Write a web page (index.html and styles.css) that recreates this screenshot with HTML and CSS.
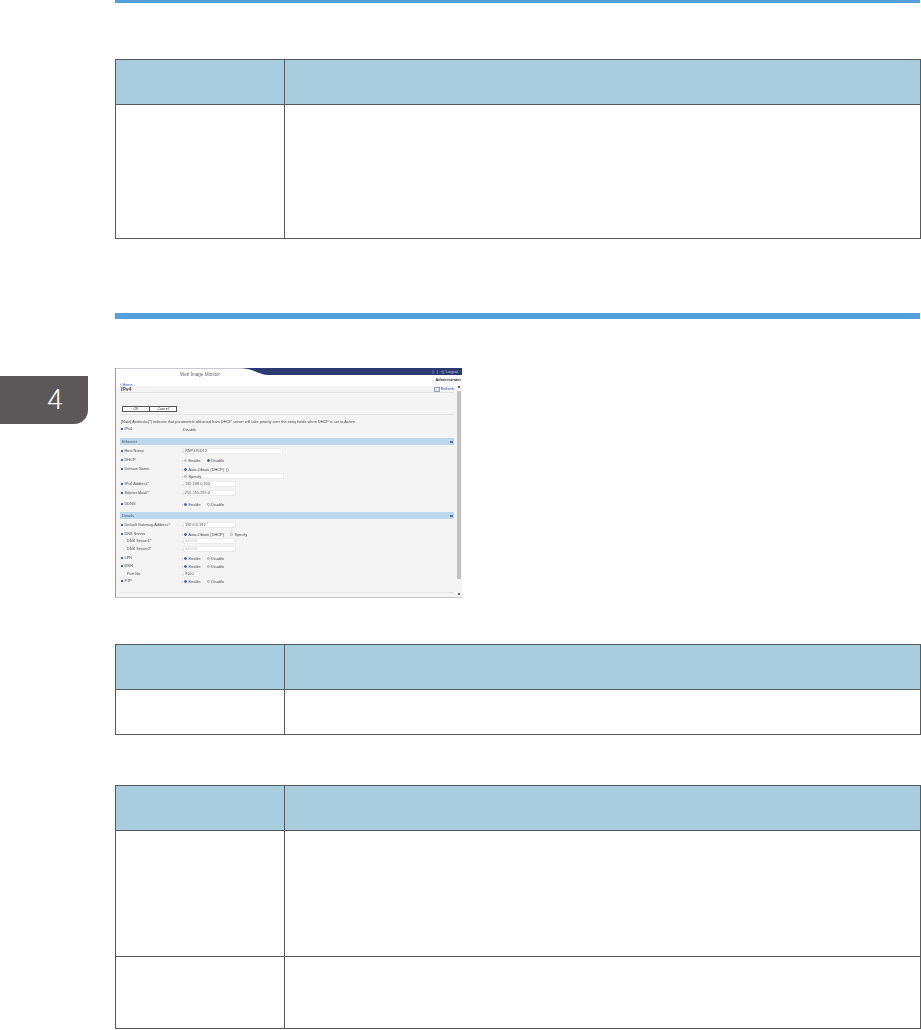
FILE: index.html
```html
<!DOCTYPE html>
<html lang="en">
<head>
<meta charset="utf-8">
<title>IPv4 settings</title>
<link rel="stylesheet" href="styles.css">
</head>
<body>
<div class="page">
  <aside class="side"><div class="tab">4</div></aside>
  <main class="main">
    <div class="rule rule-top"></div>
    <table class="tbl t1">
      <colgroup><col class="c1"><col></colgroup>
      <tr class="h45"><th></th><th></th></tr>
      <tr class="h134"><td></td><td></td></tr>
    </table>
    <div class="rule rule-mid"></div>

    <div class="shot">
      <div class="sh-head">
        <span class="sh-brand">Web Image Monitor</span>
        <svg class="sh-swoosh" viewBox="0 0 220 8" preserveAspectRatio="none"><path d="M0 0H220V7H28C18 7 12 1 0 0Z" fill="#2b3a70"/></svg>
        <span class="sh-logout">| &nbsp; | &nbsp;◁| &nbsp;Logout</span>
      </div>
      <div class="sh-admin">Administrator</div>
      <div class="sh-body">
        <div class="sh-content">
          <div class="sh-home">‹ Home</div>
          <div class="sh-title"><b>IPv4</b><span class="sh-refresh"><i class="sh-ricon"></i>Refresh</span></div>
          <div class="sh-btns"><span class="sh-btn">OK</span><span class="sh-btn">Cancel</span></div>
          <div class="sh-note">[Note] Asterisks(*) indicate that parameters obtained from DHCP server will take priority over the entry fields when DHCP is set to Active.</div>
          <div class="fr r8"><span class="l">IPv4</span><span class="v">Disable</span></div>
          <div class="sh-bar">Ethernet<i class="sh-up"></i></div>
          <div class="fr r9"><span class="l">Host Name</span><span class="v"><i class="in w100">RNP376D13</i></span></div>
          <div class="fr r9"><span class="l">DHCP</span><span class="v"><i class="ro"></i>Enable <i class="ro on"></i>Disable</span></div>
          <div class="fr r7"><span class="l">Domain Name</span><span class="v"><i class="ro on"></i>Auto-Obtain (DHCP) &nbsp;()</span></div>
          <div class="fr r8"><span></span><span class="v blank"><i class="ro"></i>Specify<i class="in w83"></i></span></div>
          <div class="fr r9"><span class="l">IPv4 Address*</span><span class="v"><i class="in w53">192.168.0.100</i></span></div>
          <div class="fr r11"><span class="l">Subnet Mask*</span><span class="v"><i class="in w53">255.255.255.0</i></span></div>
          <div class="fr r10"><span class="l">DDNS</span><span class="v"><i class="ro on"></i>Enable <i class="ro"></i>Disable</span></div>
          <div class="sh-bar second">Details<i class="sh-up"></i></div>
          <div class="fr r9"><span class="l">Default Gateway Address*</span><span class="v"><i class="in w53">192.0.0.192</i></span></div>
          <div class="fr r7"><span class="l">DNS Server</span><span class="v"><i class="ro on"></i>Auto-Obtain (DHCP) <i class="ro"></i>Specify</span></div>
          <div class="fr r8"><span class="l sub">DNS Server1*</span><span class="v"><i class="in w53 dim">0.0.0.0</i></span></div>
          <div class="fr r9"><span class="l sub">DNS Server2*</span><span class="v"><i class="in w53 dim">0.0.0.0</i></span></div>
          <div class="fr r8"><span class="l">LPR</span><span class="v"><i class="ro on"></i>Enable <i class="ro"></i>Disable</span></div>
          <div class="fr r8"><span class="l">RSH</span><span class="v"><i class="ro on"></i>Enable <i class="ro"></i>Disable</span></div>
          <div class="fr r7"><span class="l sub">Port No.</span><span class="v"><i class="in w17">9100</i></span></div>
          <div class="fr r8"><span class="l">FTP</span><span class="v"><i class="ro on"></i>Enable <i class="ro"></i>Disable</span></div>
          <div class="sh-foot"></div>
        </div>
        <div class="sh-scroll"><i class="sh-arrow"></i><i class="sh-thumb"></i><i class="sh-arrow down"></i></div>
      </div>
    </div>

    <table class="tbl t2">
      <colgroup><col class="c1"><col></colgroup>
      <tr class="h45"><th></th><th></th></tr>
      <tr class="h45"><td></td><td></td></tr>
    </table>
    <table class="tbl t3">
      <colgroup><col class="c1"><col></colgroup>
      <tr class="h45"><th></th><th></th></tr>
      <tr class="h126"><td></td><td></td></tr>
      <tr class="h72"><td></td><td></td></tr>
    </table>
  </main>
</div>
</body>
</html>
```

FILE: styles.css
```css
* { box-sizing: border-box; }
html, body { margin: 0; padding: 0; background: #fff; }
body { font-family: "Liberation Sans", Arial, sans-serif; }
.page { display: flex; width: 921px; height: 1030px; overflow: hidden; }
.side { width: 115px; flex: none; padding-top: 376px; }
.tab {
  width: 88px; height: 48px; background: #5c5758; color: #fff;
  border-bottom-right-radius: 14px;
  font: 300 28px/48px Roboto, sans-serif;
  padding-left: 47px;
}
.main { width: 806px; flex: none; }
.rule { background: #539fdc; width: 805px; }
.rule-top { height: 3px; margin-bottom: 56px; }
.rule-mid { height: 6px; margin-top: 74px; margin-bottom: 49px; }

.tbl { width: 806px; border-collapse: collapse; table-layout: fixed; }
.tbl th, .tbl td { border: 1px solid #5a5a5a; padding: 0; }
.tbl th { background: #a7cddf; }
.c1 { width: 169px; }
.h45 { height: 45px; }
.h134 { height: 134px; }
.h126 { height: 126px; }
.h72 { height: 72px; }
.t2 { margin-top: 46px; }
.t3 { margin-top: 50px; }

/* miniature screenshot */
.shot {
  width: 347px; height: 230px; background: #fff; color: #4a4a4a;
  font-size: 3.9px; line-height: 6px;
  border-left: 1px solid #9a9a9a; border-bottom: 1px solid #c8c8c8;
  filter: blur(0.42px);
  display: flex; flex-direction: column;
}
.sh-head { height: 7px; position: relative; border-top: 1px solid #c9c9d2; flex: none; }
.sh-brand { position: absolute; left: 64px; top: 2px; font-size: 4.6px; line-height: 8px; color: #666; }
.sh-swoosh { position: absolute; right: 0; top: -1px; width: 220px; height: 8px; }
.sh-logout { position: absolute; right: 4px; top: 0; color: #c9cfe6; }
.sh-admin { height: 11px; flex: none; text-align: right; padding: 2px 1px 0 0; font-weight: bold; color: #333; }
.sh-body { flex: 1; display: flex; min-height: 0; }
.sh-content { flex: 1; background: #f4f4f4; padding: 0 2px 0 4px; min-width: 0; position: relative; }
.sh-home { position: absolute; left: 4px; top: -4px; color: #3a4fa0; line-height: 5px; }
.sh-title {
  height: 7px; padding-left: 1px;
  display: flex; justify-content: space-between; align-items: center;
  font-size: 5px; border-bottom: 1px solid #e4e4e4;
}
.sh-title b { font-size: 5px; }
.sh-refresh { font-size: 3.8px; color: #3a4fa0; display: flex; align-items: center; }
.sh-ricon { width: 6px; height: 5px; border: 1px solid #8fa2b8; background: #dfe7ee; margin-right: 1px; }
.sh-btns { height: 22px; padding: 13px 0 0 2px; display: flex; border-bottom: 1px solid #e4e4e4; }
.sh-btn {
  width: 28px; height: 6px; background: #fff; border: 1px solid #555; margin-right: -1px;
  text-align: center; line-height: 4px; font-size: 3.6px; color: #333;
}
.sh-note { height: 11px; padding: 4px 0 0 1px; line-height: 5px; white-space: nowrap; }
.fr { display: grid; grid-template-columns: 61px 1fr; padding-left: 1px; line-height: 5px; }
.r7 { height: 7px; }
.r8 { height: 8px; }
.r9 { height: 9px; }
.r10 { height: 10px; }
.r11 { height: 11px; }
.l { padding-left: 3.5px; position: relative; white-space: nowrap; }
.l::before { content: ""; position: absolute; left: 0; top: 1.5px; width: 2px; height: 2px; background: #4a5f9e; }
.l.sub { padding-left: 6px; }
.l.sub::before { display: none; }
.v { display: flex; align-items: center; height: 6px; white-space: pre; }
.v::before { content: ":"; width: 1px; flex: none; }
.sh-bar {
  height: 7px; background: #bcd6ec; margin: 4px 0 3px 0; padding-left: 2px;
  line-height: 7px; display: flex; justify-content: space-between; align-items: center; color: #4c5a6a;
}
.sh-bar.second { margin: 1px 0 3px 0; }
.sh-up { width: 3px; height: 2px; background: #55719c; margin-right: 1px; }
.in {
  display: block; height: 6px; background: #fff; border: 1px solid #ececec;
  font-style: normal; line-height: 4px; padding-left: 1px;
}
.w100 { width: 100px; } .w83 { width: 83px; } .w53 { width: 53px; } .w17 { width: 17px; }
.dim { color: #aaa; }
.ro { width: 3px; height: 3px; border-radius: 50%; border: 0.5px solid #aaa; background: #fff; margin: 0 1.5px 0 1px; flex: none; }
.ro:not(:first-child) { margin-left: 5px; }
.ro.on { background: #3f5f9c; border-color: #3f5f9c; }
.sh-foot { margin-top: 6px; height: 1px; background: #e2e2e2; }
.sh-scroll { width: 6px; flex: none; background: #f4f4f4; display: flex; flex-direction: column; align-items: center; padding-bottom: 2px; }
.sh-arrow { width: 2px; height: 2px; background: #666; flex: none; margin-bottom: 3px; }
.sh-arrow.down { margin: 14px 0 0; }
.sh-thumb { width: 4px; flex: 1; background: #c2c2c2; }
```
